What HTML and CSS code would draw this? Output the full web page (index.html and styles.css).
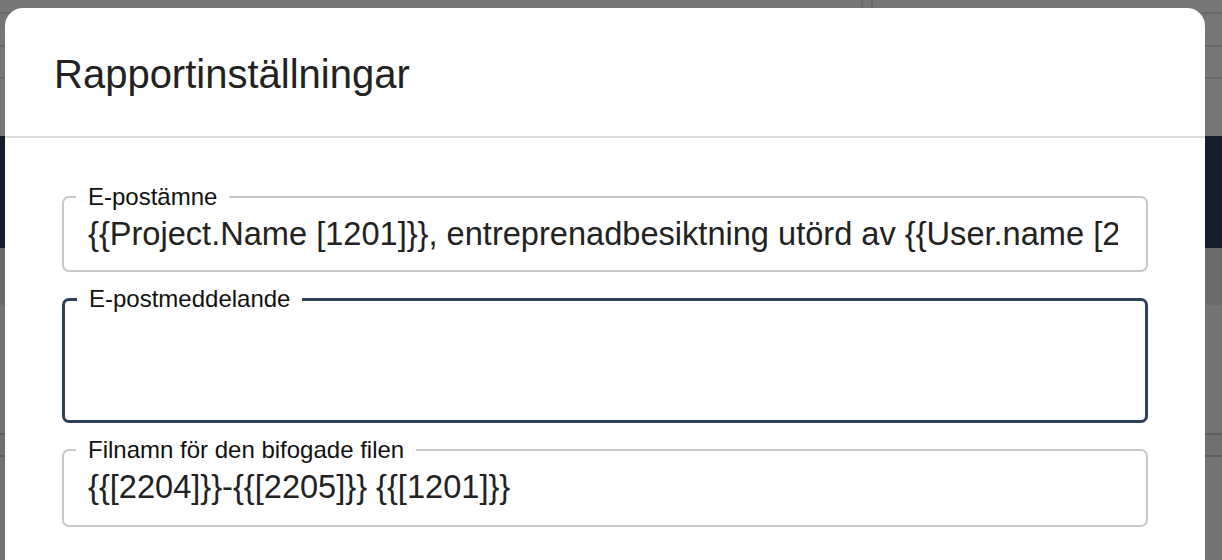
FILE: index.html
```html
<!DOCTYPE html>
<html lang="sv">
<head>
<meta charset="utf-8">
<title>Rapportinställningar</title>
<link rel="stylesheet" href="styles.css">
</head>
<body>
<div class="app">
  <div class="app-row app-row--top">
    <span class="app-col app-col--a"></span>
    <span class="app-col app-col--b"></span>
  </div>
  <div class="app-row app-row--b"></div>
  <div class="app-row app-row--c"></div>
  <div class="app-row app-row--d"></div>
  <div class="app-band"></div>
  <div class="app-row app-row--e"></div>
  <div class="app-row app-row--f"></div>
  <div class="app-row app-row--g"></div>
  <div class="app-row app-row--h"></div>
</div>

<div class="modal" role="dialog" aria-labelledby="modal-title">
  <div class="modal-header">
    <h2 class="modal-title" id="modal-title">Rapportinställningar</h2>
  </div>
  <div class="modal-body">
    <fieldset class="field">
      <legend class="field-label">E-postämne</legend>
      <input class="field-input field-input--clip" type="text" value="{{Project.Name [1201]}}, entreprenadbesiktning utörd av {{User.name [2201]}}">
    </fieldset>
    <fieldset class="field field--focused">
      <legend class="field-label">E-postmeddelande</legend>
      <textarea class="field-textarea"></textarea>
    </fieldset>
    <fieldset class="field field--last">
      <legend class="field-label">Filnamn för den bifogade filen</legend>
      <input class="field-input" type="text" value="{{[2204]}}-{{[2205]}} {{[1201]}}">
    </fieldset>
  </div>
</div>
</body>
</html>
```

FILE: styles.css
```css
html, body {
  margin: 0;
  padding: 0;
  height: 100%;
  overflow: hidden;
}

body {
  background: #737373;
  font-family: "Liberation Sans", Arial, Helvetica, sans-serif;
  color: #222222;
}

/* dimmed application underneath the dialog */
.app {
  display: flex;
  flex-direction: column;
  height: 100%;
}

.app-row {
  flex: none;
  box-sizing: border-box;
  border-bottom: 2px solid #686868;
  background: #777777;
}

.app-row--top {
  height: 14px;
  display: flex;
  padding-left: 861px;
  gap: 8px;
}

.app-col {
  display: block;
  width: 2px;
  height: 100%;
  background: #6a6a6a;
}

.app-row--b { height: 33px; background: #767676; }
.app-row--c { height: 32px; background: #767676; }
.app-row--d { height: 57px; border-bottom: none; background: #777777; }

.app-band {
  flex: none;
  height: 112px;
  background: #161d2a;
}

.app-row--e { height: 57px; background: #6b6b6b; border-bottom: none; }
.app-row--f { height: 130px; background: #737373; border-bottom: 2px solid #5e5e5e; }
.app-row--g { height: 22px; background: #707070; border-bottom: 2px solid #5e5e5e; }
.app-row--h { flex: 1; background: #737373; border-bottom: none; }

/* dialog */
.modal {
  position: absolute;
  top: 8px;
  left: 5px;
  width: 1200px;
  height: 600px;
  background: #ffffff;
  border-radius: 18px;
  overflow: hidden;
}

.modal-header {
  padding: 42px 48px 38px 49px;
  border-bottom: 2px solid #dedede;
}

.modal-title {
  margin: 0;
  font-size: 40px;
  line-height: 48px;
  font-weight: 400;
  color: #222222;
}

.modal-body {
  display: flex;
  flex-direction: column;
  gap: 13px;
  padding: 45px 57px 0;
}

.field {
  margin: 0;
  min-width: 0;
  padding: 0 12px 13px;
  border: 2px solid #c8c8c8;
  border-radius: 7px;
}

.field-label {
  padding: 0 12px;
  font-size: 24px;
  line-height: 28px;
  color: #111111;
}

.field--focused {
  border: 3px solid #2e3f5c;
  padding-bottom: 4px;
}

.field--last {
  padding-bottom: 15px;
}

.field-input {
  display: block;
  box-sizing: border-box;
  width: 100%;
  height: 46px;
  margin: 0;
  padding: 0 12px;
  border: none;
  outline: none;
  background: transparent;
  font-family: "Liberation Sans", Arial, Helvetica, sans-serif;
  font-size: 32.6px;
  line-height: 46px;
  color: #222222;
}

.field-input--clip {
  padding-right: 16px;
}

.field-textarea {
  display: block;
  box-sizing: border-box;
  width: 100%;
  height: 103px;
  margin: 0;
  padding: 4px 12px;
  border: none;
  outline: none;
  resize: none;
  background: transparent;
  font-family: "Liberation Sans", Arial, Helvetica, sans-serif;
  font-size: 32.6px;
  color: #222222;
}
```
